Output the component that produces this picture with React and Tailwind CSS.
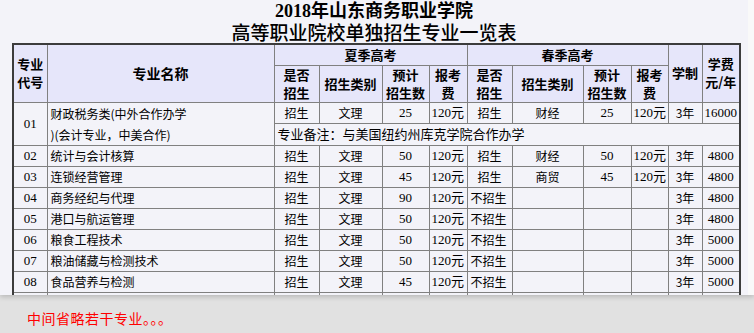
import React from 'react';

const rows = [
  { code: '02', name: '统计与会计核算', s: ['招生', '文理', '50', '120元'], p: ['招生', '财经', '50', '120元'], fee: '4800' },
  { code: '03', name: '连锁经营管理', s: ['招生', '文理', '45', '120元'], p: ['招生', '商贸', '45', '120元'], fee: '4800' },
  { code: '04', name: '商务经纪与代理', s: ['招生', '文理', '90', '120元'], p: ['不招生', '', '', ''], fee: '4800' },
  { code: '05', name: '港口与航运管理', s: ['招生', '文理', '50', '120元'], p: ['不招生', '', '', ''], fee: '4800' },
  { code: '06', name: '粮食工程技术', s: ['招生', '文理', '50', '120元'], p: ['不招生', '', '', ''], fee: '5000' },
  { code: '07', name: '粮油储藏与检测技术', s: ['招生', '文理', '50', '120元'], p: ['不招生', '', '', ''], fee: '5000' },
  { code: '08', name: '食品营养与检测', s: ['招生', '文理', '45', '120元'], p: ['不招生', '', '', ''], fee: '5000' },
  { code: '09', name: '食品质量与安全', s: ['招生', '文理', '50', '120元'], p: ['不招生', '', '', ''], fee: '5000' },
];

const cjk = "font-['Noto_Sans_CJK_SC',sans-serif]";
const serif = "font-['Liberation_Serif','Noto_Sans_CJK_SC',serif]";
const cell = 'border border-[#808080] p-0';
const th = `border border-[#808080] p-0 bg-[#e6e6fa] font-bold text-[13px] leading-[18px] text-center text-black ${cjk}`;
const td = `${cell} text-[12px] leading-[20px] text-center text-black ${cjk}`;
const num = `${cell} text-[13px] leading-[20px] text-center text-black ${serif}`;

function Cells({ s, p, fee }) {
  return (
    <>
      <td className={td}>{s[0]}</td>
      <td className={td}>{s[1]}</td>
      <td className={num}>{s[2]}</td>
      <td className={`${num} text-left pl-[2px]`}>{s[3]}</td>
      <td className={`${td} ${p[0] === '不招生' ? 'text-left pl-[3px]' : ''}`}>{p[0]}</td>
      <td className={td}>{p[1]}</td>
      <td className={num}>{p[2]}</td>
      <td className={`${num} text-left pl-[2px]`}>{p[3]}</td>
      <td className={td}>3年</td>
      <td className={`${num} text-[12px]`}>{fee}</td>
    </>
  );
}

export default function App() {
  return (
    <div className="w-[754px] h-[333px] bg-[#e1e1e1] overflow-hidden">
      <div className="h-[295px] flex bg-[#f3f3f9] shadow-[0_2px_5px_rgba(0,0,0,0.18)] relative">
        <div className="w-[748px] h-full overflow-hidden">
          <div className={`text-center text-black ${cjk}`}>
            <div className={`h-[20px] leading-[22px] text-[18px] font-bold ${serif}`}>2018年山东商务职业学院</div>
            <div className="h-[23px] leading-[24px] text-[19px] font-medium">高等职业院校单独招生专业一览表</div>
          </div>
          <table className="ml-[12px] w-[727px] border-collapse border-2 border-[#3c3c3c] table-fixed">
            <colgroup>
              <col className="w-[34px]" />
              <col className="w-[227px]" />
              <col className="w-[45px]" />
              <col className="w-[63px]" />
              <col className="w-[47px]" />
              <col className="w-[38px]" />
              <col className="w-[45px]" />
              <col className="w-[71px]" />
              <col className="w-[48px]" />
              <col className="w-[37px]" />
              <col className="w-[34px]" />
              <col className="w-[38px]" />
            </colgroup>
            <thead>
              <tr className="h-[21px]">
                <th rowSpan={2} className={th}>专业<br />代号</th>
                <th rowSpan={2} className={`${th} text-[14px]`}>专业名称</th>
                <th colSpan={4} className={th}>夏季高考</th>
                <th colSpan={4} className={th}>春季高考</th>
                <th rowSpan={2} className={th}>学制</th>
                <th rowSpan={2} className={th}>学费<br />元/年</th>
              </tr>
              <tr className="h-[37px]">
                <th className={th}>是否<br />招生</th>
                <th className={th}>招生类别</th>
                <th className={th}>预计<br />招生数</th>
                <th className={th}>报考<br />费</th>
                <th className={th}>是否<br />招生</th>
                <th className={th}>招生类别</th>
                <th className={th}>预计<br />招生数</th>
                <th className={th}>报考<br />费</th>
              </tr>
            </thead>
            <tbody>
              <tr className="h-[21px]">
                <td rowSpan={2} className={`${num} text-[12px]`}>01</td>
                <td rowSpan={2} className={`${td} text-left pl-[3px] !leading-[21px]`}>
                  财政税务类(中外合作办学<br />)(会计专业，中美合作)
                </td>
                <Cells s={['招生', '文理', '25', '120元']} p={['招生', '财经', '25', '120元']} fee="16000" />
              </tr>
              <tr className="h-[22px]">
                <td colSpan={10} className={`${td} text-left pl-[3px] text-[13px]`}>专业备注：与美国纽约州库克学院合作办学</td>
              </tr>
              {rows.map((r) => (
                <tr key={r.code} className="h-[21px]">
                  <td className={`${num} text-[12px]`}>{r.code}</td>
                  <td className={`${td} text-left pl-[3px]`}>{r.name}</td>
                  <Cells s={r.s} p={r.p} fee={r.fee} />
                </tr>
              ))}
            </tbody>
          </table>
        </div>
        <div className="flex-1 bg-[#f9f9f9]" />
      </div>
      <div className={`pt-[14px] pl-[27px] text-[14px] leading-[18px] tracking-[0.5px] text-[#ff0000] ${cjk}`}>
        中间省略若干专业。。。
      </div>
    </div>
  );
}
